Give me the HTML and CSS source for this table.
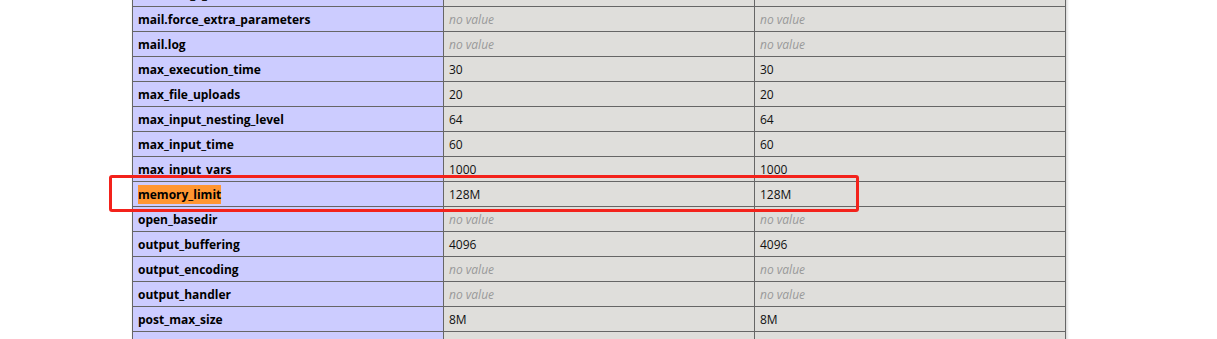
FILE: index.html
```html
<!DOCTYPE html>
<html>
<head>
<meta charset="utf-8">
<link rel="stylesheet" href="styles.css">
</head>
<body>
<div class="page">
<table class="info">
<tr><td class="e">mail.add_x_header</td><td class="v">Off</td><td class="v">Off</td></tr>
<tr><td class="e">mail.force_extra_parameters</td><td class="v"><i>no value</i></td><td class="v"><i>no value</i></td></tr>
<tr><td class="e">mail.log</td><td class="v"><i>no value</i></td><td class="v"><i>no value</i></td></tr>
<tr><td class="e">max_execution_time</td><td class="v">30</td><td class="v">30</td></tr>
<tr><td class="e">max_file_uploads</td><td class="v">20</td><td class="v">20</td></tr>
<tr><td class="e">max_input_nesting_level</td><td class="v">64</td><td class="v">64</td></tr>
<tr><td class="e">max_input_time</td><td class="v">60</td><td class="v">60</td></tr>
<tr><td class="e">max_input_vars</td><td class="v">1000</td><td class="v">1000</td></tr>
<tr><td class="e"><mark class="hit">memory_limit</mark></td><td class="v">128M</td><td class="v">128M</td></tr>
<tr><td class="e">open_basedir</td><td class="v"><i>no value</i></td><td class="v"><i>no value</i></td></tr>
<tr><td class="e">output_buffering</td><td class="v">4096</td><td class="v">4096</td></tr>
<tr><td class="e">output_encoding</td><td class="v"><i>no value</i></td><td class="v"><i>no value</i></td></tr>
<tr><td class="e">output_handler</td><td class="v"><i>no value</i></td><td class="v"><i>no value</i></td></tr>
<tr><td class="e">post_max_size</td><td class="v">8M</td><td class="v">8M</td></tr>
<tr><td class="e">precision</td><td class="v">14</td><td class="v">14</td></tr>
</table>
<div class="callout"></div>
</div>
</body>
</html>
```
FILE: styles.css
```css
html, body {
  margin: 0;
  padding: 0;
  background: #fff;
}
body {
  font-family: "Open Sans", "Noto Sans", "Liberation Sans", sans-serif;
  color: #222;
  overflow: hidden;
  height: 339px;
}
.page {
  position: relative;
  display: flow-root;
  padding-left: 132px;
}
.info {
  border-collapse: collapse;
  border: 0;
  width: 934px;
  margin-top: -19px;
  box-shadow: 1px 2px 3px #ccc;
  table-layout: fixed;
}
.info td {
  border: 1px solid #666;
  font-size: 12px;
  line-height: 16px;
  padding: 5px 5px 3px;
  vertical-align: baseline;
  text-align: left;
  white-space: nowrap;
}
.e {
  background-color: #ccccff;
  width: 300px;
  font-weight: bold;
  color: #000;
}
.v {
  background-color: #dfdedb;
  color: #111;
}
.v i {
  color: #999;
}
.hit {
  background-color: #ff9632;
  color: #000;
  padding: 1px 0;
}
.callout {
  position: absolute;
  left: 109px;
  top: 175px;
  width: 744px;
  height: 31px;
  border: 3px solid #f3221b;
  border-radius: 3px;
}
```
